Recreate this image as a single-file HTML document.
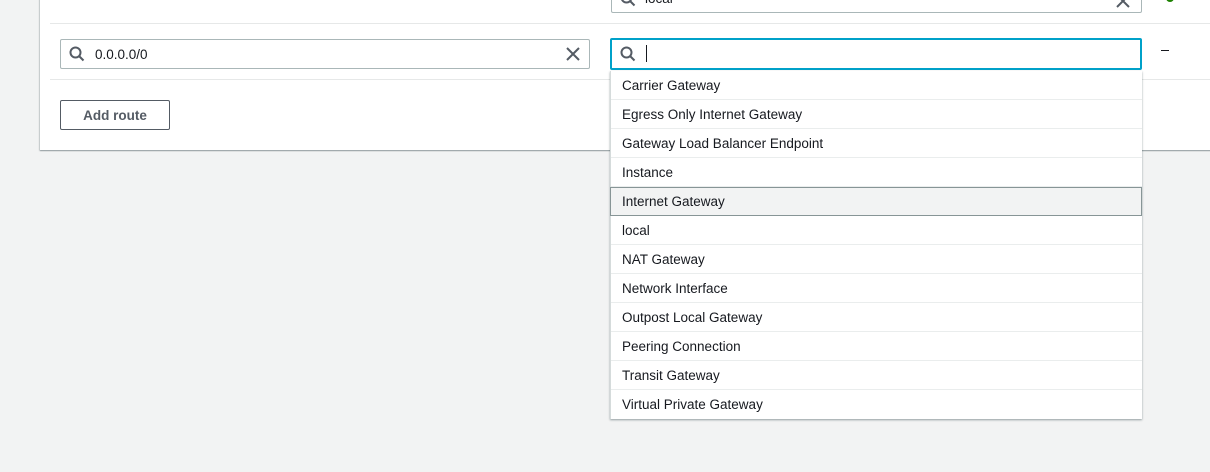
<!DOCTYPE html>
<html><head><style>
body{margin:0;width:1210px;height:472px;background:#f2f3f3;font-family:"Liberation Sans",sans-serif;overflow:hidden;position:relative;color:#16191f}
.panel{position:absolute;left:40px;top:-2px;width:1180px;height:152px;background:#fff;box-shadow:0 1px 1px rgba(0,28,36,.3),0 0 1px 1px rgba(0,28,36,.15)}
.sep{position:absolute;left:50px;width:1170px;height:1px;background:#e6e8e8}
.inp{position:absolute;box-sizing:border-box;background:#fff;border:1px solid #aab7b8;border-radius:2px}
.txt{position:absolute;font-size:13.5px}
svg{position:absolute}
.dd{position:absolute;left:610px;top:71px;width:532px;height:348px;background:#fff;box-shadow:0 1px 2px rgba(0,28,36,.4);border-left:1px solid #d5dbdb;box-sizing:border-box}
.it{height:29px;box-sizing:border-box;border-bottom:1px solid #eaeded;font-size:13.5px;line-height:30px;padding-left:11px}
.it.hl{background:#f2f3f3;border:1px solid #879596;margin-left:-1px;line-height:28px}
.it:last-child{border-bottom:0}
</style></head><body>
<div class="panel"></div>
<div class="sep" style="top:23px"></div>
<div class="sep" style="top:79px"></div>
<div class="inp" style="left:611px;top:-18px;width:531px;height:31px"></div>
<div class="txt" style="left:645px;top:-9px;color:#16191f">local</div>
<svg style="left:620px;top:-9px" width="16" height="16"><circle cx="6.5" cy="6.5" r="5" fill="none" stroke="#545b64" stroke-width="2"/><path d="M10 10L14.5 14.5" stroke="#545b64" stroke-width="2"/></svg>
<svg style="left:1114px;top:-8px" width="18" height="18"><path d="M3 3L15 15M15 3L3 15" stroke="#545b64" stroke-width="2"/></svg>
<div style="position:absolute;left:1166px;top:-6px;width:8px;height:8px;border-radius:50%;background:#1d8102"></div>

<div class="inp" style="left:60px;top:39px;width:530px;height:30px"></div>
<svg style="left:69px;top:46px" width="16" height="16"><circle cx="6.5" cy="6.5" r="5" fill="none" stroke="#545b64" stroke-width="2"/><path d="M10 10L14.5 14.5" stroke="#545b64" stroke-width="2"/></svg>
<div class="txt" style="left:95px;top:47px">0.0.0.0/0</div>
<svg style="left:564px;top:45px" width="18" height="18"><path d="M3 3L15 15M15 3L3 15" stroke="#545b64" stroke-width="2"/></svg>

<div class="inp" style="left:610px;top:38px;width:532px;height:32px;border:2px solid #00a1c9"></div>
<svg style="left:620px;top:46px" width="16" height="16"><circle cx="6.5" cy="6.5" r="5" fill="none" stroke="#545b64" stroke-width="2"/><path d="M10 10L14.5 14.5" stroke="#545b64" stroke-width="2"/></svg>
<div style="position:absolute;left:646px;top:45px;width:1px;height:17px;background:#16191f"></div>
<div style="position:absolute;left:1161px;top:50px;width:8px;height:1px;background:#16191f"></div>

<div style="position:absolute;left:60px;top:100px;width:110px;height:30px;box-sizing:border-box;border:1px solid #545b64;border-radius:2px;background:#fff;font-size:13.5px;font-weight:bold;color:#545b64;text-align:center;line-height:29px">Add route</div>

<div class="dd">
<div class="it">Carrier Gateway</div>
<div class="it">Egress Only Internet Gateway</div>
<div class="it">Gateway Load Balancer Endpoint</div>
<div class="it">Instance</div>
<div class="it hl">Internet Gateway</div>
<div class="it">local</div>
<div class="it">NAT Gateway</div>
<div class="it">Network Interface</div>
<div class="it">Outpost Local Gateway</div>
<div class="it">Peering Connection</div>
<div class="it">Transit Gateway</div>
<div class="it">Virtual Private Gateway</div>
</div>
</body></html>
